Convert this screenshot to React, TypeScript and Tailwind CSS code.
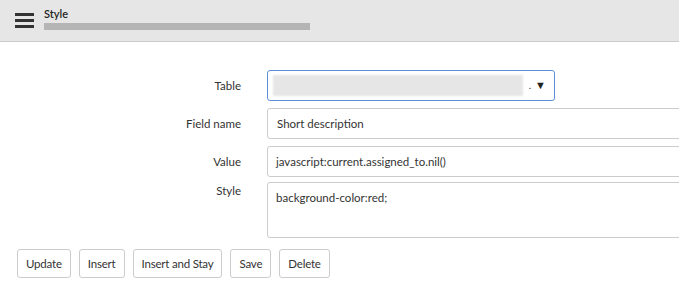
import React from "react";

const font = { fontFamily: "Lato, 'Open Sans', sans-serif" };

function Row({ label, children, top = "items-center", cls = "" }: { label: string; children: React.ReactNode; top?: string; cls?: string }) {
  return (
    <div className={`flex ${top} ${cls}`}>
      <div className="w-[241px] shrink-0 text-right text-[11.5px] text-[#333]">{label}</div>
      <div className="ml-[26px] flex-1">{children}</div>
    </div>
  );
}

export default function App() {
  return (
    <div className="w-[679px] h-[296px] bg-white overflow-hidden text-[#333]" style={font}>
      <div className="h-[42px] bg-[#e6e6e6] border-b border-[#c9cbcc] flex items-start">
        <div className="ml-[15px] mt-[13px] flex flex-col gap-[3px]">
          <div className="w-[19px] h-[3px] bg-[#333]" />
          <div className="w-[19px] h-[3px] bg-[#333]" />
          <div className="w-[19px] h-[3px] bg-[#333]" />
        </div>
        <div className="ml-[10px] mt-[7px] flex flex-col">
          <div className="text-[11px] leading-[13px] font-semibold text-[#222]">Style</div>
          <div className="mt-[3px] w-[266px] h-[7px] bg-[#b5b5b5] blur-[0.5px]" />
        </div>
      </div>
      <div className="mt-[28px] flex flex-col mr-[-20px]">
        <Row label="Table">
          <div className="w-[288px] h-[31px] border border-[#5b8fd6] rounded-[3px] flex items-center pl-[5px] pr-[8px]">
            <div className="w-[253px] h-[21px] bg-[#e6e6e6] blur-[1px]" />
            <span className="ml-[6px] text-[10px] text-[#333]">.</span>
            <span className="ml-[4px] text-[11px] text-[#222]">▼</span>
          </div>
        </Row>
        <Row label="Field name" cls="mt-[7px]">
          <div className="h-[31px] border border-[#cccccc] rounded-[3px] flex items-center px-[9px] text-[11.5px]">Short description</div>
        </Row>
        <Row label="Value" cls="mt-[7px]">
          <div className="h-[31px] border border-[#cccccc] rounded-[3px] flex items-center px-[8px] text-[11.5px]">javascript:current.assigned_to.nil()</div>
        </Row>
        <Row label="Style" top="items-start" cls="mt-[5px]">
          <div className="h-[56px] border border-[#cccccc] rounded-[3px] px-[8px] pt-[6px] text-[11.5px]">background-color:red;</div>
        </Row>
      </div>
      <div className="mt-[11px] ml-[17px] flex gap-[8px]">
        {["Update", "Insert", "Insert and Stay", "Save", "Delete"].map((b) => (
          <div key={b} className="h-[29px] px-[8px] border border-[#cccccc] rounded-[3px] flex items-center text-[11.5px] tracking-[-0.2px] text-[#333] bg-white">{b}</div>
        ))}
      </div>
    </div>
  );
}
